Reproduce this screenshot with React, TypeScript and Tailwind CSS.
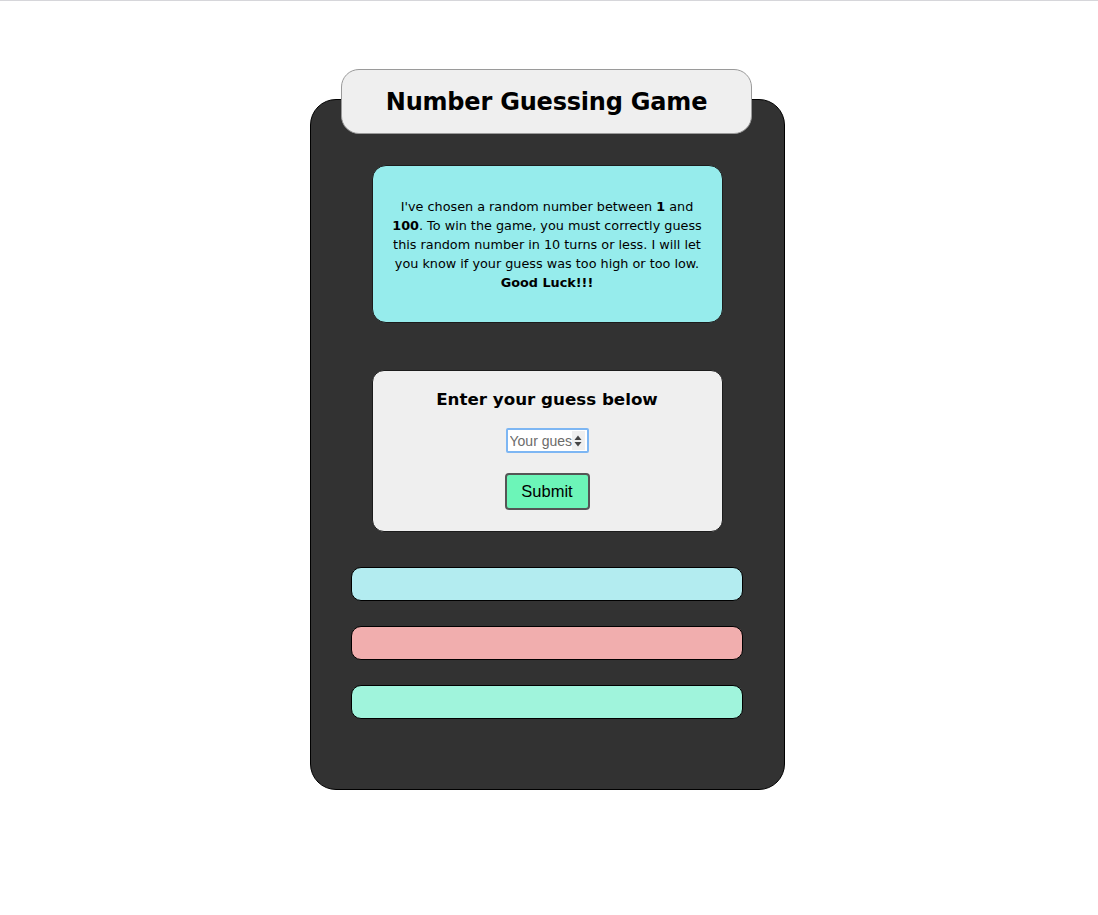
import React from "react";

const font = { fontFamily: "'DejaVu Sans', Inter, sans-serif" };

export default function App() {
  return (
    <div className="min-h-[915px] w-full bg-white border-t border-[#d6d6da] flex justify-center pr-[4px]" style={font}>
      <div className="mt-[98px] w-[475px] h-[691px] rounded-[26px] border border-black bg-[#323232] flex flex-col items-center">
        <div className="-mt-[31px] ml-[-1px] w-[411px] h-[65px] rounded-[18px] border border-[#9a9a9a] bg-[#efefef] flex items-center justify-center">
          <h1 className="text-[24px] font-bold text-black tracking-[-0.2px]">Number Guessing Game</h1>
        </div>
        <div className="mt-[31px] w-[351px] h-[158px] rounded-[14px] border border-[#1c1c1c] bg-[#96ecec] flex items-center justify-center">
          <p className="text-[12.8px] leading-[19px] text-black text-center whitespace-nowrap pt-[1px]">
            I've chosen a random number between <b>1</b> and
            <br />
            <b>100</b>. To win the game, you must correctly guess
            <br />
            this random number in 10 turns or less. I will let
            <br />
            you know if your guess was too high or too low.
            <br />
            <b>Good Luck!!!</b>
          </p>
        </div>
        <div className="mt-[47px] w-[351px] h-[162px] rounded-[12px] border border-[#1c1c1c] bg-[#efefef] flex flex-col items-center">
          <h2 className="mt-[17px] text-[16.7px] leading-[22px] font-bold text-black">Enter your guess below</h2>
          <div className="mt-[18px] flex items-center w-[83px] h-[25px] border-2 border-[#7db6f3] rounded-[2px] bg-white pl-[2px] pr-[2px]">
            <input
              type="text"
              placeholder="Your guess"
              className="w-[62px] h-full bg-transparent outline-none text-[14px] text-[#555] placeholder:text-[#6b6b6b]"
              style={{ fontFamily: "'Liberation Sans', Arial, sans-serif" }}
            />
            <div className="flex-1 h-[19px] bg-[#efefef] flex items-center justify-center">
              <svg width="8" height="12" viewBox="0 0 8 12">
                <path d="M4 0.5 L7.5 5 L0.5 5 Z" fill="#444" />
                <path d="M4 11.5 L7.5 7 L0.5 7 Z" fill="#444" />
              </svg>
            </div>
          </div>
          <button
            className="mt-[20px] w-[85px] h-[37px] rounded-[4px] border-2 border-[#555] bg-[#6cf5b8] text-[16.5px] text-black"
            style={{ fontFamily: "'Liberation Sans', Arial, sans-serif" }}
          >
            Submit
          </button>
        </div>
        <div className="mt-[35px] w-[392px] flex flex-col gap-[25px]">
          <div className="h-[34px] rounded-[10px] border border-black bg-[#b3ecf0]" />
          <div className="h-[34px] rounded-[10px] border border-black bg-[#f1aeae]" />
          <div className="h-[34px] rounded-[10px] border border-black bg-[#a0f4dc]" />
        </div>
      </div>
    </div>
  );
}
